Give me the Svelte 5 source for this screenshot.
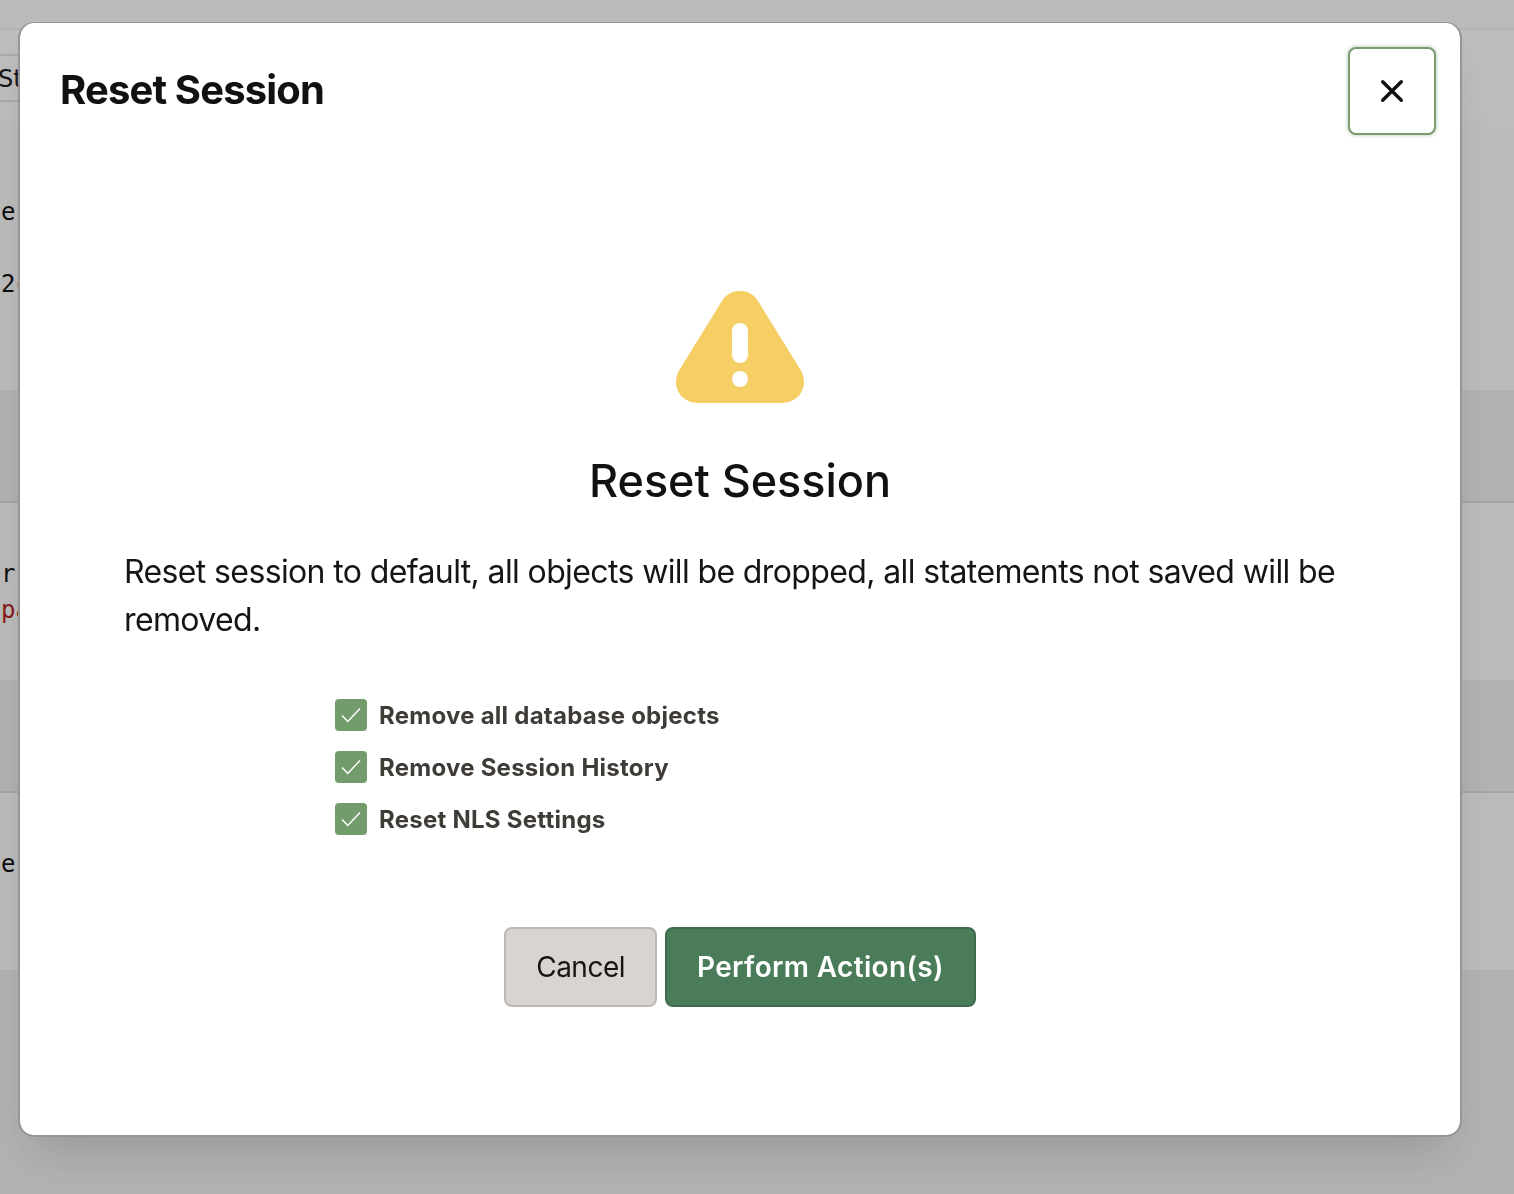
<script lang="ts">
  let options = [
    { id: "objects", label: "Remove all database objects", checked: true },
    { id: "history", label: "Remove Session History", checked: true },
    { id: "nls", label: "Reset NLS Settings", checked: true },
  ];
</script>

<div class="page">
  <div class="topbar"></div>
  <div class="toolbar">
    <div class="tabs">St</div>
  </div>
  <div class="row first">
    <div class="mono">er</div>
    <div class="mono second">2c</div>
  </div>
  <div class="stripe"></div>
  <div class="row">
    <div class="mono">r</div>
    <div class="mono error">pa</div>
  </div>
  <div class="stripe"></div>
  <div class="row">
    <div class="mono">e</div>
  </div>
  <div class="stripe end"></div>
</div>

<div class="overlay">
  <div class="modal" role="dialog" aria-modal="true" aria-labelledby="modal-title">
    <div class="modal-header">
      <h2 id="modal-title">Reset Session</h2>
      <button type="button" class="close-btn" aria-label="Close modal">
        <svg width="24" height="24" viewBox="0 0 24 24" fill="none" stroke="#0f0f0d" stroke-width="3.4" stroke-linecap="round">
          <path d="M2.7 2.7 21.3 21.3M21.3 2.7 2.7 21.3" />
        </svg>
      </button>
    </div>

    <div class="modal-content">
      <svg class="warning" width="128" height="112" viewBox="0 0 128 112">
        <path
          fill="#f5ce64"
          d="M46 10C54 -3.4 74 -3.4 82 10L124 78C134 94 124 112 106 112H22C4 112 -6 94 4 78Z"
        />
        <rect x="56" y="32" width="16" height="40" rx="8" fill="#fff" />
        <circle cx="64" cy="88" r="8" fill="#fff" />
      </svg>

      <h3>Reset Session</h3>
      <p>Reset session to default, all objects will be dropped, all statements not saved will be removed.</p>

      <div class="options">
        {#each options as opt (opt.id)}
          <label class="option">
            <input type="checkbox" bind:checked={opt.checked} />
            <span class="box">
              <svg width="20" height="16" viewBox="0 0 20 16" fill="none" stroke="#fff" stroke-width="1.5">
                <path d="M1 8.5 6.8 14.5 19 1.5" />
              </svg>
            </span>
            <span>{opt.label}</span>
          </label>
        {/each}
      </div>

      <div class="modal-actions">
        <button type="button" class="btn cancel">Cancel</button>
        <button type="button" class="btn primary">Perform Action(s)</button>
      </div>
    </div>
  </div>
</div>

<style>
  :global(body) {
    margin: 0;
    background: #fbf9f8;
    font-family: Inter, "Liberation Sans", sans-serif;
  }

  .page {
    height: 1194px;
    overflow: hidden;
    display: flex;
    flex-direction: column;
    background: #fbfafa;
  }

  .topbar {
    height: 28px;
    flex-shrink: 0;
    background: #fbf9f6;
    border-bottom: 2px solid #f0eeeb;
  }

  .toolbar {
    height: 96px;
    flex-shrink: 0;
    box-sizing: border-box;
    padding-top: 24px;
    background: #fdfdfd;
  }

  .tabs {
    height: 48px;
    box-sizing: border-box;
    border-top: 2px solid #e4e2df;
    border-bottom: 2px solid #e4e2df;
    font-family: "DejaVu Sans", sans-serif;
    font-size: 24px;
    line-height: 46px;
    text-indent: -2px;
    color: #222;
    width: 40px;
  }

  .row {
    height: 177px;
    flex-shrink: 0;
    box-sizing: border-box;
    padding: 53px 0 0 1px;
    background: #fbfafa;
  }

  .row.first {
    height: 264px;
    padding-top: 68px;
  }

  .mono {
    font-family: "DejaVu Sans Mono", monospace;
    font-size: 24px;
    line-height: 36px;
    color: #111;
  }

  .second {
    margin-top: 36px;
  }

  .error {
    color: #b3261e;
  }

  .stripe {
    height: 113px;
    flex-shrink: 0;
    background: #eeeeee;
    border-bottom: 2px solid #dcdcdc;
    box-sizing: border-box;
  }

  .stripe.end {
    flex: 1;
    border-bottom: none;
  }

  .overlay {
    position: fixed;
    inset: 0;
    background: rgba(0, 0, 0, 0.25);
    z-index: 10;
  }

  .modal {
    box-sizing: border-box;
    width: 1444px;
    height: 1115px;
    margin: 22px 0 0 18px;
    background: #fff;
    border-radius: 16px;
    border: 2px solid #969696;
    border-width: 1px 2px 2px 2px;
    box-shadow: 0 26px 50px -14px rgba(0, 0, 0, 0.16);
    display: flex;
    flex-direction: column;
    background-clip: padding-box;
  }

  .modal-header {
    display: flex;
    justify-content: space-between;
    align-items: center;
    padding: 24px 24px 0 40px;
  }

  .modal-header h2 {
    margin: -3px 0 0;
    font-size: 40px;
    font-weight: 700;
    letter-spacing: -0.85px;
    color: #111;
  }

  .close-btn {
    width: 88px;
    height: 88px;
    background: #fff;
    border: 2px solid #7a9c6e;
    border-radius: 8px;
    box-shadow: 0 0 4px rgba(122, 156, 110, 0.6);
    display: flex;
    align-items: center;
    justify-content: center;
    padding: 0;
  }

  .modal-content {
    flex: 1;
    min-height: 0;
    display: flex;
    flex-direction: column;
    align-items: center;
    padding: 156px 104px 0;
  }

  .warning {
    display: block;
  }

  h3 {
    margin: 50px 0 0;
    font-size: 45px;
    line-height: 56px;
    font-weight: 500;
    letter-spacing: -0.05px;
    color: #111;
  }

  p {
    align-self: stretch;
    margin: 39px 0 0;
    font-size: 32px;
    line-height: 48px;
    letter-spacing: -0.62px;
    color: #161513;
  }

  .options {
    width: 810px;
    margin-top: 55px;
    display: flex;
    flex-direction: column;
    gap: 20px;
  }

  .option {
    display: flex;
    align-items: center;
    gap: 12px;
    height: 32px;
    font-size: 24px;
    font-weight: 700;
    letter-spacing: 0.25px;
    color: #3f3c38;
  }

  .option input {
    position: absolute;
    opacity: 0;
    width: 0;
    height: 0;
  }

  .box {
    width: 32px;
    height: 32px;
    border-radius: 4px;
    background: #739c6c;
    display: flex;
    align-items: center;
    justify-content: center;
    flex-shrink: 0;
  }

  .modal-actions {
    margin-top: 92px;
    display: flex;
    gap: 8px;
  }

  .btn {
    height: 80px;
    padding: 0 30px;
    border-radius: 8px;
    font-family: inherit;
    font-size: 28px;
  }

  .cancel {
    background: #d8d5d1;
    border: 2px solid #bcb8b2;
    color: #161513;
    letter-spacing: -0.5px;
  }

  .primary {
    background: #4a7c59;
    border: 2px solid #3f6b4c;
    color: #fff;
    font-weight: 600;
    letter-spacing: 0.35px;
  }
</style>
